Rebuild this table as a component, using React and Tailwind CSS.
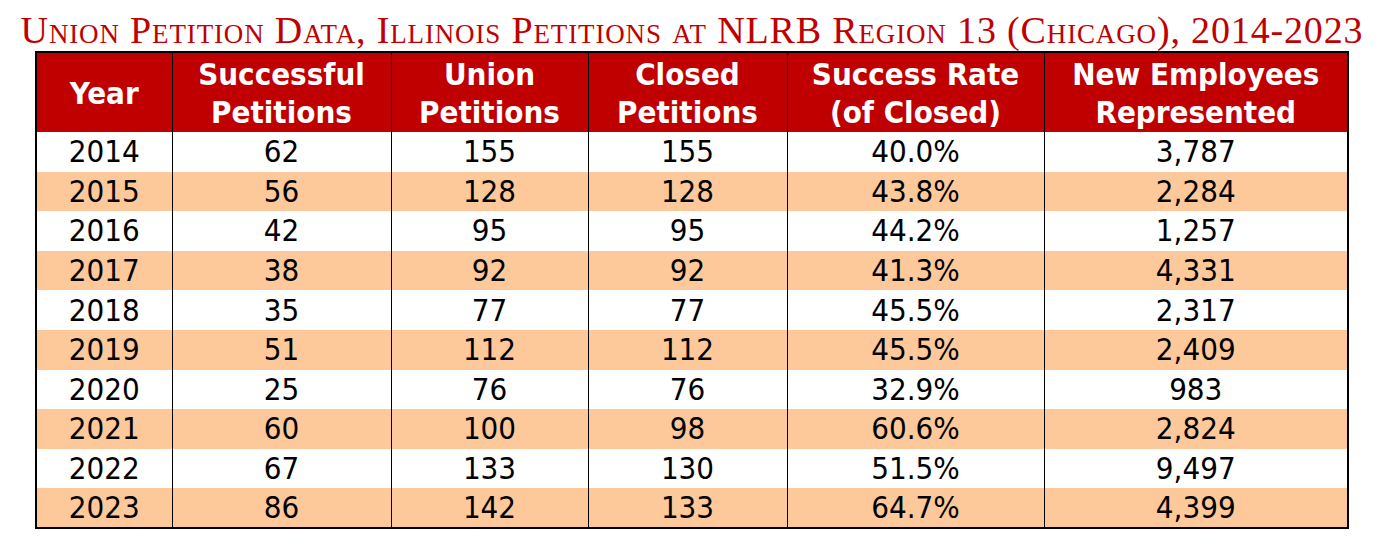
const rows = [
  ["2014", "62", "155", "155", "40.0%", "3,787"],
  ["2015", "56", "128", "128", "43.8%", "2,284"],
  ["2016", "42", "95", "95", "44.2%", "1,257"],
  ["2017", "38", "92", "92", "41.3%", "4,331"],
  ["2018", "35", "77", "77", "45.5%", "2,317"],
  ["2019", "51", "112", "112", "45.5%", "2,409"],
  ["2020", "25", "76", "76", "32.9%", "983"],
  ["2021", "60", "100", "98", "60.6%", "2,824"],
  ["2022", "67", "133", "130", "51.5%", "9,497"],
  ["2023", "86", "142", "133", "64.7%", "4,399"],
];

const headers = [
  ["Year"],
  ["Successful", "Petitions"],
  ["Union", "Petitions"],
  ["Closed", "Petitions"],
  ["Success Rate", "(of Closed)"],
  ["New Employees", "Represented"],
];

const widths = ["w-[136px]", "w-[219px]", "w-[197px]", "w-[199px]", "w-[257px]", "w-[304px]"];

export default function App() {
  return (
    <div className="w-[1384px] h-[544px] bg-white flex flex-col items-center overflow-hidden">
      <h1 className="mt-[9px] h-[42px] text-[#c00000] text-[38px] tracking-[0.85px] leading-[42px] [font-variant:small-caps] font-['Liberation_Serif',serif] whitespace-nowrap">
        Union Petition Data, Illinois Petitions at NLRB Region 13 (Chicago), 2014-2023
      </h1>
      <table className="table-fixed border-collapse border-2 border-black font-['DejaVu_Sans_Condensed','DejaVu_Sans',sans-serif]">
        <thead>
          <tr className="bg-[#c00000] text-white h-[80px]">
            {headers.map((h, i) => (
              <th
                key={i}
                className={`${widths[i]} border-x border-black font-bold text-[31px] leading-[38px] text-center p-0`}
              >
                {h.map((line, j) => (
                  <div key={j}>{line}</div>
                ))}
              </th>
            ))}
          </tr>
        </thead>
        <tbody>
          {rows.map((r, i) => (
            <tr key={i} className={i % 2 === 1 ? "bg-[#fdc99b] h-[39.6px]" : "bg-white h-[39.6px]"}>
              {r.map((c, j) => (
                <td key={j} className="border-x border-black text-black text-[31px] leading-[39px] text-center p-0">
                  {c}
                </td>
              ))}
            </tr>
          ))}
        </tbody>
      </table>
    </div>
  );
}
